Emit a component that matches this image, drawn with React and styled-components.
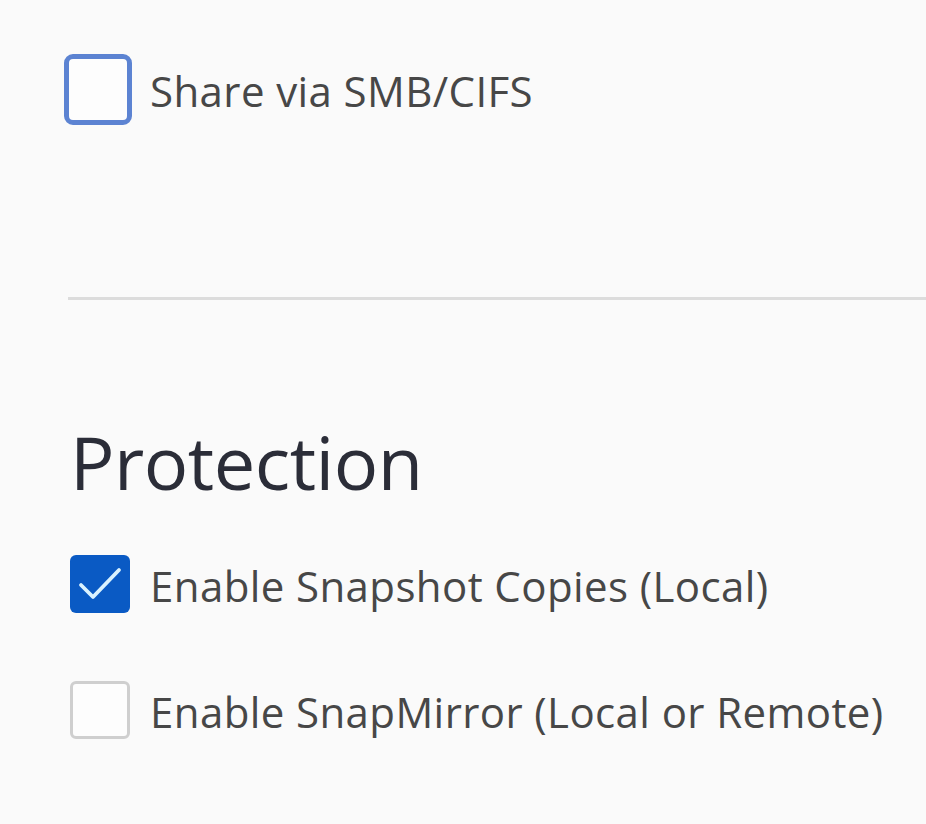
import React from "react";
import styled, { createGlobalStyle } from "styled-components";

const GlobalStyle = createGlobalStyle`
  html, body {
    margin: 0;
    padding: 0;
    background: #fafafa;
  }
  body {
    font-family: "Open Sans", "Noto Sans", sans-serif;
  }
`;

const OPTIONS = [
  { label: "Enable Snapshot Copies (Local)", checked: true },
  { label: "Enable SnapMirror (Local or Remote)", checked: false },
];

function CheckIcon() {
  return (
    <svg width="48" height="42" viewBox="0 0 48 42" fill="none">
      <path
        d="M5 22 L17 34 L43 7"
        stroke="#d9f2ff"
        strokeWidth="3.8"
        strokeLinecap="round"
        strokeLinejoin="round"
      />
    </svg>
  );
}

function App() {
  return (
    <Page>
      <GlobalStyle />
      <ShareRow>
        <FocusBox />
        <Label>Share via SMB/CIFS</Label>
      </ShareRow>
      <Divider />
      <Heading>Protection</Heading>
      <OptionList>
        {OPTIONS.map((opt) => (
          <OptionRow key={opt.label}>
            <Box checked={opt.checked}>{opt.checked && <CheckIcon />}</Box>
            <Label>{opt.label}</Label>
          </OptionRow>
        ))}
      </OptionList>
    </Page>
  );
}

const Page = styled.main`
  width: 926px;
  height: 824px;
  box-sizing: border-box;
  padding: 54px 0 0 64px;
  background: #fafafa;
  overflow: hidden;
`;

const ShareRow = styled.div`
  display: flex;
  align-items: center;
  gap: 18px;
`;

const FocusBox = styled.div`
  width: 68px;
  height: 71px;
  box-sizing: border-box;
  border: 5px solid #5c83d2;
  border-radius: 9px;
  background: #fdfdfd;
`;

const Label = styled.span`
  font-size: 42px;
  font-weight: 500;
  line-height: 1.2;
  color: #474747;
  letter-spacing: 0.4px;
  transform: translateY(2px);
`;

const Divider = styled.hr`
  margin: 172px 0 0 4px;
  border: none;
  height: 3px;
  background: #dcdcdc;
`;

const Heading = styled.h2`
  margin: 125px 0 0 6px;
  font-size: 74px;
  font-weight: 400;
  line-height: 1;
  color: #2b2d38;
  letter-spacing: -0.5px;
`;

const OptionList = styled.div`
  display: flex;
  flex-direction: column;
  gap: 68px;
  margin: 56px 0 0 6px;
`;

const OptionRow = styled.div`
  display: flex;
  align-items: center;
  gap: 20px;
`;

const Box = styled.div`
  width: 60px;
  height: 58px;
  box-sizing: border-box;
  border-radius: 6px;
  display: flex;
  align-items: center;
  justify-content: center;
  border: ${(p) => (p.checked ? "none" : "3px solid #cfcfcf")};
  background: ${(p) => (p.checked ? "#0a5ac4" : "#fdfdfd")};
`;

export default App;
